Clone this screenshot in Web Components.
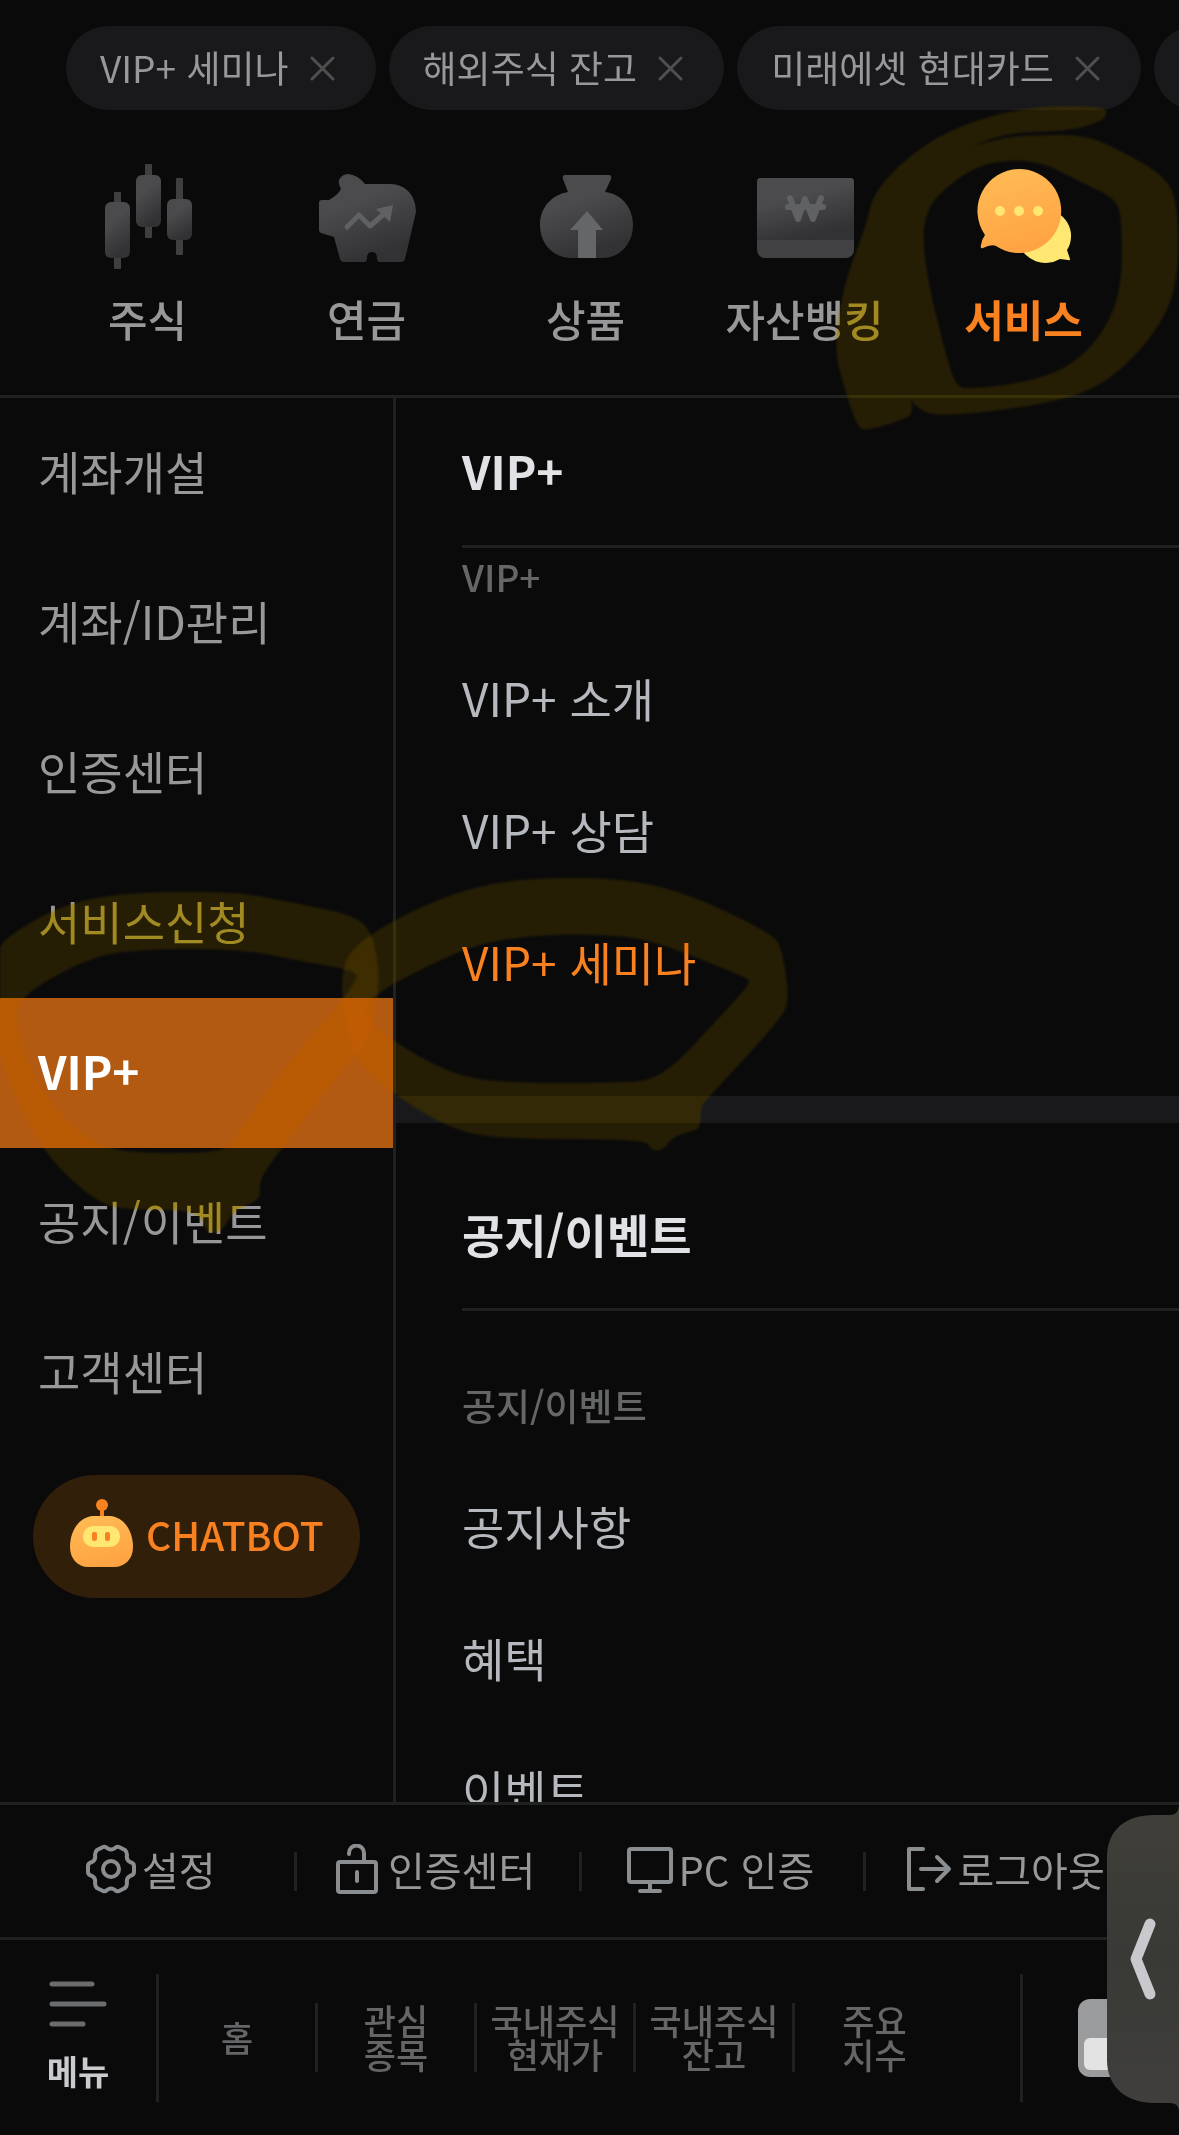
<!DOCTYPE html>
<html lang="ko">
<head>
<meta charset="utf-8">
<meta name="viewport" content="width=device-width, initial-scale=1">
<title>전체 메뉴</title>
<style>
  html {
    background: #0a0a0a;
  }
  body {
    margin: 0;
    font-family: "Noto Sans CJK KR", "Noto Sans", sans-serif;
    --line: #202121;
    --muted: #98989a;
    --dim: #656668;
    --accent: #f98120;
  }
</style>
</head>
<body>
<menu-screen>
  <history-chip slot="history">VIP+ 세미나</history-chip>
  <history-chip slot="history">해외주식 잔고</history-chip>
  <history-chip slot="history">미래에셋 현대카드</history-chip>
  <history-chip slot="history"></history-chip>

  <category-tab slot="tabs" icon="stock">주식</category-tab>
  <category-tab slot="tabs" icon="pension">연금</category-tab>
  <category-tab slot="tabs" icon="fund">상품</category-tab>
  <category-tab slot="tabs" icon="bank">자산뱅킹</category-tab>
  <category-tab slot="tabs" icon="service" active>서비스</category-tab>

  <side-item slot="side">계좌개설</side-item>
  <side-item slot="side">계좌/ID관리</side-item>
  <side-item slot="side">인증센터</side-item>
  <side-item slot="side">서비스신청</side-item>
  <side-item slot="side" active>VIP+</side-item>
  <side-item slot="side">공지/이벤트</side-item>
  <side-item slot="side">고객센터</side-item>
  <chat-button slot="side">CHATBOT</chat-button>

  <menu-section slot="main" heading="VIP+" caption="VIP+" compact>
    <menu-link>VIP+ 소개</menu-link>
    <menu-link>VIP+ 상담</menu-link>
    <menu-link active>VIP+ 세미나</menu-link>
  </menu-section>
  <menu-section slot="main" heading="공지/이벤트" caption="공지/이벤트">
    <menu-link>공지사항</menu-link>
    <menu-link>혜택</menu-link>
    <menu-link>이벤트</menu-link>
  </menu-section>

  <utility-item slot="utility" icon="gear">설정</utility-item>
  <utility-item slot="utility" icon="lock">인증센터</utility-item>
  <utility-item slot="utility" icon="monitor">PC 인증</utility-item>
  <utility-item slot="utility" icon="logout">로그아웃</utility-item>

  <dock-item slot="dock">홈</dock-item>
  <dock-item slot="dock">관심<br>종목</dock-item>
  <dock-item slot="dock">국내주식<br>현재가</dock-item>
  <dock-item slot="dock">국내주식<br>잔고</dock-item>
  <dock-item slot="dock">주요<br>지수</dock-item>
</menu-screen>

<script>
const TAB_ICONS = {
  stock: `<svg viewBox="99 160 98 110">
    <g fill="#3f3f41"><rect x="114" y="192" width="7" height="77" rx="1"/><rect x="145" y="164" width="7" height="74" rx="1"/><rect x="176" y="178" width="7" height="77" rx="1"/></g>
    <g fill="url(#g)"><rect x="105" y="202" width="25" height="56" rx="6"/><rect x="136" y="175" width="25" height="52" rx="6"/><rect x="167" y="199" width="25" height="41" rx="6"/></g></svg>`,
  pension: `<svg viewBox="318 160 98 110">
    <path fill="url(#g)" d="M341 189Q338 184 339 180Q342 174 348 174Q358 175 365 184H390C406 184 416 196 416 212L405 259Q404 262 401 262H380Q377 262 377 258Q377 252 372 252Q367 252 367 258Q367 262 364 262H344Q341 262 340 259L334 237L321 233Q319 232 319 230V203Q319 200 322 200H329Q338 195 341 189Z"/>
    <path fill="none" stroke="#606163" stroke-width="5" stroke-linecap="round" stroke-linejoin="round" d="M347 227L359 215L370 226L385 213"/>
    <path fill="#606163" d="M376 209L393 205L390 222Z"/></svg>`,
  fund: `<svg viewBox="537 160 98 110">
    <path fill="url(#g)" d="M565 175H609Q612 175 611 179L605 192C622 194 633 208 633 225C633 244 620 258 602 258H572C553 258 540 244 540 225C540 208 551 195 568 192L563 179Q562 175 565 175Z"/>
    <path fill="#656668" d="M587 211L603 230H596V258H578V230H570Z"/></svg>`,
  bank: `<svg viewBox="756 160 98 110">
    <rect x="757" y="178" width="97" height="80" rx="8" fill="#414143"/>
    <path fill="url(#g)" d="M760 178H851Q854 178 854 182V240H757V182Q757 178 760 178Z"/>
    <path fill="none" stroke="#606163" stroke-width="6" stroke-linecap="round" stroke-linejoin="round" d="M790 198L798 219L805 199L813 219L821 198M788 207H823"/></svg>`,
  service: `<svg viewBox="975 160 98 110">
    <path fill="#ffe772" d="M1043 209A28 27 0 0 1 1067 250L1070 259Q1070 261 1068 260L1060 259A28 27 0 1 1 1043 209Z"/>
    <path fill="url(#o)" d="M1019 169A42 42 0 1 1 996 246Q991 244 983 248Q980 249 981 245Q982 239 985 235A42 42 0 0 1 1019 169Z"/>
    <g fill="#ffe772"><circle cx="1000" cy="211" r="5"/><circle cx="1019" cy="211" r="5"/><circle cx="1038" cy="211" r="5"/></g></svg>`
};

const GRADIENTS = `<svg width="0" height="0" style="position:absolute" aria-hidden="true"><defs>
  <linearGradient id="g" x1="0" y1="0" x2=".4" y2="1"><stop offset=".4" stop-color="#4b4b4d"/><stop offset="1" stop-color="#323234"/></linearGradient>
  <linearGradient id="o" x1="0" y1="0" x2=".3" y2="1"><stop offset="0" stop-color="#ffbd55"/><stop offset="1" stop-color="#ffa444"/></linearGradient>
</defs></svg>`;

const UTILITY_ICONS = {
  gear: `<svg width="50" height="50" viewBox="0 0 50 50"><path d="M17 3Q19 2 21 4Q25 7 29 4Q31 2 33 3L39 6Q41 8 41 11Q40 16 44 18Q48 19 48 22V28Q48 31 44 32Q40 34 41 39Q41 42 39 44L33 47Q31 48 29 46Q25 43 21 46Q19 48 17 47L11 44Q9 42 9 39Q10 34 6 32Q2 31 2 28V22Q2 19 6 18Q10 16 9 11Q9 8 11 6Z"/><circle cx="25" cy="25" r="8"/></svg>`,
  lock: `<svg width="46" height="50" viewBox="0 0 46 50"><rect x="2" y="18" width="38" height="30" rx="2"/><path d="M13 10V9A7 7 0 0 1 28 9V17M21 28V37"/></svg>`,
  monitor: `<svg width="46" height="50" viewBox="0 0 46 50"><rect x="2" y="5" width="42" height="33" rx="2"/><path d="M23 38V46M13 47H33"/></svg>`,
  logout: `<svg width="46" height="50" viewBox="0 0 46 50"><path d="M17 5H3V45H17M15 25H43M31 13L43 25L31 37"/></svg>`
};

class BaseElement extends HTMLElement {
  constructor() {
    super();
    this.attachShadow({ mode: "open" });
  }

  connectedCallback() {
    const template = document.createElement("template");
    template.innerHTML = `
      <style>
        * { box-sizing: border-box; }
        :host { display: block; }
        svg { display: block; }
        button {
          margin: 0;
          padding: 0;
          border: none;
          background: none;
          color: inherit;
          font: inherit;
          cursor: pointer;
        }
        a { color: inherit; text-decoration: none; }
      </style>
      ${this.render()}`;
    this.shadowRoot.replaceChildren(template.content.cloneNode(true));
  }
}

class MenuScreen extends BaseElement {
  render() {
    return `
      <style>
        :host {
          display: flex;
          flex-direction: column;
          height: 100vh;
          position: relative;
          overflow: hidden;
        }
        .history {
          display: flex;
          gap: 13px;
          padding: 26px 0 0 66px;
          overflow: hidden;
        }
        .tabs {
          display: grid;
          grid-template-columns: repeat(5, 1fr);
          padding: 50px 46px 45px 38px;
          border-bottom: 3px solid var(--line);
        }
        .content {
          flex: 1;
          min-height: 0;
          display: grid;
          grid-template-columns: calc(100% / 3 + 3px) 1fr;
          overflow: hidden;
        }
        .side { border-right: 3px solid var(--line); }
        .main { overflow: hidden; }
        .utility {
          display: grid;
          grid-template-columns: repeat(4, 1fr);
          height: 138px;
          padding: 0 28px 0 12px;
          border-top: 3px solid var(--line);
          border-bottom: 3px solid var(--line);
        }
        .dock {
          display: flex;
          align-items: center;
          height: 195px;
        }
        .menu, .apps {
          display: flex;
          flex-direction: column;
          height: 128px;
        }
        .menu {
          width: 159px;
          align-items: center;
          justify-content: center;
          gap: 16px;
          border-right: 3px solid var(--line);
          color: #c9cbcf;
          font-size: 34px;
          line-height: 50px;
          font-weight: 700;
        }
        .items { flex: 1; display: grid; grid-template-columns: repeat(5, 159px); }
        .apps {
          width: 159px;
          padding-left: 55px;
          justify-content: center;
          border-left: 3px solid var(--line);
        }
      </style>
      <nav class="history" aria-label="최근 메뉴"><slot name="history"></slot></nav>
      <nav class="tabs" aria-label="분류"><slot name="tabs"></slot></nav>
      <div class="content">
        <nav class="side" aria-label="하위 분류"><slot name="side"></slot></nav>
        <main class="main"><slot name="main"></slot></main>
      </div>
      <nav class="utility" aria-label="설정"><slot name="utility"></slot></nav>
      <nav class="dock" aria-label="바로가기">
        <button class="menu">
          <svg width="60" height="50" viewBox="0 0 60 50" fill="none" stroke="#6b6c6e" stroke-width="5" stroke-linecap="round"><path d="M4 4H44M4 24H56M4 44H35"/></svg>
          메뉴
        </button>
        <div class="items"><slot name="dock"></slot></div>
        <button class="apps" aria-label="화면 전환">
          <svg width="84" height="78" viewBox="0 0 84 78"><rect width="84" height="78" rx="12" fill="#9a9b9d"/><rect x="6" y="39" width="36" height="32" rx="6" fill="#e3e3e4"/></svg>
        </button>
      </nav>
      <edge-handle></edge-handle>
      <ink-mark shape="side"></ink-mark>
      <ink-mark shape="link"></ink-mark>
      <ink-mark shape="tab"></ink-mark>
    `;
  }
}

class HistoryChip extends BaseElement {
  render() {
    return `
      <style>
        :host {
          display: flex;
          flex: none;
          align-items: center;
          gap: 21px;
          height: 84px;
          padding: 0 41px 0 34px;
          border-radius: 42px;
          background: #19191b;
          color: var(--muted);
          font-size: 37px;
          line-height: 54px;
          white-space: nowrap;
        }
        a { padding-bottom: 2px; }
      </style>
      <a href="#"><slot></slot></a>
      <button aria-label="삭제"><svg width="25" height="25" viewBox="0 0 25 25" stroke="#4f4f50" stroke-width="3" stroke-linecap="round"><path d="M2 2L23 23M23 2L2 23"/></svg></button>
    `;
  }
}

class CategoryTab extends BaseElement {
  render() {
    return `
      <style>
        button {
          display: flex;
          flex-direction: column;
          align-items: center;
          gap: 16px;
          width: 100%;
          color: var(--muted);
          font-size: 43px;
          line-height: 64px;
          font-weight: 500;
          white-space: nowrap;
        }
        .icon svg { width: 98px; height: 110px; }
        :host([active]) button { color: var(--accent); font-weight: 700; }
      </style>
      ${GRADIENTS}
      <button><span class="icon">${TAB_ICONS[this.getAttribute("icon")]}</span><span><slot></slot></span></button>
    `;
  }
}

class SideItem extends BaseElement {
  render() {
    return `
      <style>
        a {
          display: flex;
          align-items: center;
          height: 150px;
          padding: 0 0 6px 38px;
          color: var(--muted);
          font-size: 46px;
          line-height: 66px;
        }
        :host([active]) a {
          background: #b25a12;
          color: #fff;
          font-weight: 700;
        }
      </style>
      <a href="#"><slot></slot></a>
    `;
  }
}

class ChatButton extends BaseElement {
  render() {
    return `
      <style>
        :host { padding: 27px 33px; }
        button {
          display: flex;
          align-items: center;
          gap: 13px;
          width: 100%;
          height: 123px;
          padding: 0 0 6px 37px;
          border-radius: 62px;
          background: #311f0a;
          color: var(--accent);
          font-size: 39px;
          line-height: 60px;
          font-weight: 500;
        }
      </style>
      ${GRADIENTS}
      <button>
        <svg width="63" height="74" viewBox="70 1497 63 74">
          <circle cx="102" cy="1505" r="6" fill="#f98120"/><path d="M102 1506V1518" stroke="#f98120" stroke-width="4"/>
          <path fill="url(#o)" d="M93 1516H110C124 1517 133 1531 133 1547C133 1559 125 1567 114 1567H88C78 1567 70 1559 70 1547C70 1531 79 1517 93 1516Z"/>
          <rect x="83" y="1526" width="37" height="21" rx="10" fill="#ffe772"/>
          <rect x="92" y="1532" width="5" height="9" rx="2" fill="#f98120"/><rect x="105" y="1532" width="5" height="9" rx="2" fill="#f98120"/>
        </svg>
        <slot></slot>
      </button>
    `;
  }
}

class MenuSection extends BaseElement {
  render() {
    return `
      <style>
        :host { padding: 38px 0 0 66px; }
        :host([compact]) {
          padding-top: 0;
          padding-bottom: 67px;
          border-bottom: 27px solid #19191b;
        }
        h2 {
          display: flex;
          align-items: center;
          height: 150px;
          margin: 0;
          padding-bottom: 4px;
          border-bottom: 3px solid var(--line);
          color: #e0e2e5;
          font-size: 46px;
          line-height: 66px;
          font-weight: 700;
        }
        h3 {
          margin: 0;
          padding: 67px 0 29px;
          color: var(--dim);
          font-size: 37px;
          line-height: 54px;
          font-weight: 500;
        }
        :host([compact]) h3 { padding-top: 1px; padding-bottom: 30px; }
      </style>
      <h2>${this.getAttribute("heading")}</h2>
      <h3>${this.getAttribute("caption")}</h3>
      <slot></slot>
    `;
  }
}

class MenuLink extends BaseElement {
  render() {
    return `
      <style>
        a {
          display: flex;
          align-items: center;
          height: 132px;
          padding-bottom: 5px;
          color: #b5b8bc;
          font-size: 46px;
          line-height: 66px;
        }
        :host([active]) a { color: var(--accent); }
      </style>
      <a href="#"><slot></slot></a>
    `;
  }
}

class UtilityItem extends BaseElement {
  render() {
    return `
      <style>
        :host {
          display: flex;
          align-items: center;
          justify-content: center;
          position: relative;
        }
        :host(:not(:last-of-type))::after {
          content: "";
          position: absolute;
          right: 0;
          width: 3px;
          height: 39px;
          background: var(--line);
        }
        button {
          display: flex;
          align-items: center;
          gap: 6px;
          padding: 0 7px 4px 0;
          color: var(--muted);
          font-size: 40px;
          line-height: 60px;
          white-space: nowrap;
        }
        svg { fill: none; stroke: #8b8e90; stroke-width: 4; stroke-linecap: round; stroke-linejoin: round; }
      </style>
      <button>${UTILITY_ICONS[this.getAttribute("icon")]}<span><slot></slot></span></button>
    `;
  }
}

class DockItem extends BaseElement {
  render() {
    return `
      <style>
        :host {
          display: flex;
          align-items: center;
          justify-content: center;
          height: 69px;
        }
        :host(:not(:last-of-type)) { border-right: 3px solid var(--line); }
        button {
          padding-bottom: 2px;
          color: var(--dim);
          font-size: 35px;
          line-height: 34px;
          font-weight: 500;
          white-space: nowrap;
        }
      </style>
      <button><slot></slot></button>
    `;
  }
}

// Pull-out handle that floats over the bottom right corner
class EdgeHandle extends BaseElement {
  render() {
    return `
      <style>
        :host { position: absolute; right: 0; bottom: 25px; }
        button { display: block; }
      </style>
      <button aria-label="열기">
        <svg width="72" height="304" viewBox="0 0 72 304">
          <defs><linearGradient id="h" x1="0" y1="0" x2="0" y2="1"><stop offset="0" stop-color="#403f3a"/><stop offset=".5" stop-color="#393935"/><stop offset="1" stop-color="#403f3e"/></linearGradient></defs>
          <path fill="url(#h)" d="M72 0Q71 9 63 9H48C18 9 0 24 0 52V254C0 280 18 297 48 297H63Q71 297 72 304Z"/>
          <path fill="none" stroke="#c9c9cd" stroke-width="11" stroke-linecap="round" stroke-linejoin="round" d="M43 118L29 153L43 188"/>
        </svg>
      </button>
    `;
  }
}

const INK_SHAPES = {
  side: [
    [[-6,950],[17,930],[67,903],[133,892],[240,892],[293,903],[350,914],[372,930],[381,983],[370,1037],[353,1057],[283,1147],[260,1177],[260,1194],[258,1200],[232,1212],[222,1232],[206,1234],[200,1210],[133,1210],[98,1204],[43,1153],[7,1080],[-6,1030]],
    [[17,998],[83,960],[133,949],[243,949],[300,961],[343,968],[358,974],[356,980],[343,1000],[287,1063],[240,1130],[228,1148],[207,1153],[133,1153],[100,1146],[67,1123],[33,1077],[17,1027]]
  ],
  link: [
    [[341,983],[347,953],[387,923],[460,890],[527,878],[620,878],[687,893],[773,934],[782,950],[789,997],[783,1017],[703,1103],[701,1108],[700,1126],[697,1130],[673,1136],[663,1151],[650,1150],[647,1139],[503,1139],[453,1130],[397,1097],[363,1067],[353,1053],[345,1017]],
    [[380,993],[390,985],[470,945],[533,935],[603,934],[653,940],[745,977],[752,982],[720,1017],[662,1079],[620,1083],[503,1083],[453,1075],[393,1042],[367,1017],[364,1003]]
  ],
  tab: [
    [[1038,135],[1084,135],[1115,148],[1164,175],[1178,203],[1178,287],[1153,337],[1107,383],[1057,402],[962,415],[916,414],[897,367],[868,283],[868,200],[908,167],[962,150],[1000,138]],
    [[990,161],[1038,160],[1077,180],[1115,198],[1122,217],[1122,293],[1099,340],[1065,370],[1019,384],[968,389],[956,386],[947,360],[924,267],[923,210],[958,177]]
  ],
  tail: [
    [[1105,107],[1038,106],[981,118],[924,143],[874,190],[866,227],[844,283],[834,347],[844,387],[857,426],[866,431],[908,418],[912,412],[912,400],[897,367],[889,320],[901,233],[922,186],[962,150],[1008,132],[1069,131],[1102,121],[1107,114]]
  ]
};

// Closed curve through the midpoints of the given points
function smooth(points) {
  const mid = (a, b) => `${(a[0] + b[0]) / 2} ${(a[1] + b[1]) / 2}`;
  const last = points[points.length - 1];
  let d = `M${mid(last, points[0])}`;
  points.forEach((p, i) => {
    d += `Q${p[0]} ${p[1]} ${mid(p, points[(i + 1) % points.length])}`;
  });
  return d + "Z";
}

// Highlighter stroke: one layer tints what is below, one adds a faint glow
class InkMark extends BaseElement {
  render() {
    const shape = this.getAttribute("shape");
    const ring = `<path fill-rule="evenodd" d="${INK_SHAPES[shape].map(smooth).join("")}"/>`;
    const tail = shape === "tab" ? `<path d="${INK_SHAPES.tail.map(smooth).join("")}"/>` : "";
    const layer = (name) => `<svg class="${name}" viewBox="0 0 1179 2135" preserveAspectRatio="xMinYMin meet" aria-hidden="true">${ring}${tail}</svg>`;
    return `
      <style>
        svg {
          position: absolute;
          top: 0;
          left: 0;
          width: 100%;
          pointer-events: none;
          filter: blur(1px);
        }
        .tint { fill: rgb(224, 194, 54); mix-blend-mode: multiply; }
        .glow { fill: rgb(29, 22, 1); mix-blend-mode: plus-lighter; }
      </style>
      ${layer("tint")}${layer("glow")}
    `;
  }
}

customElements.define("menu-screen", MenuScreen);
customElements.define("history-chip", HistoryChip);
customElements.define("category-tab", CategoryTab);
customElements.define("side-item", SideItem);
customElements.define("chat-button", ChatButton);
customElements.define("menu-section", MenuSection);
customElements.define("menu-link", MenuLink);
customElements.define("utility-item", UtilityItem);
customElements.define("dock-item", DockItem);
customElements.define("edge-handle", EdgeHandle);
customElements.define("ink-mark", InkMark);
</script>
</body>
</html>
